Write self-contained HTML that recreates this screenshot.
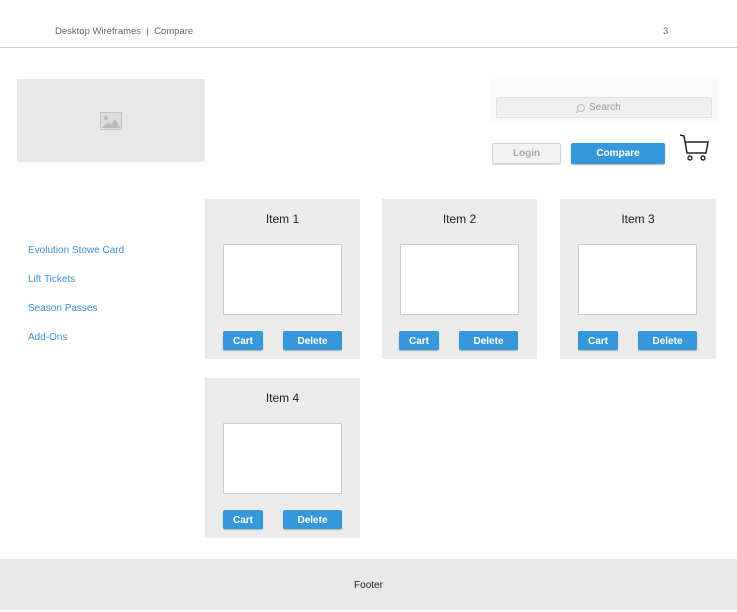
<!DOCTYPE html>
<html><head><meta charset="utf-8"><style>
*{margin:0;padding:0;box-sizing:border-box}
body{width:737px;height:610px;background:#fff;position:relative;font-family:"Liberation Sans",sans-serif;overflow:hidden}
.a{position:absolute}
.hdr{font-size:9.5px;color:#666}
.card{position:absolute;width:155px;height:160px;background:#ebebeb}
.card .t{position:absolute;top:13px;width:100%;text-align:center;font-size:12px;color:#222}
.card .box{position:absolute;left:18px;top:45px;width:119px;height:71px;background:#fff;border:1px solid #ccc}
.btn{position:absolute;top:132px;height:19px;background:#3498db;color:#fff;font-weight:bold;font-size:10px;text-align:center;line-height:21px;border-radius:2px;box-shadow:0 1px 1px rgba(0,0,0,.25)}
.nav{position:absolute;left:28px;font-size:10px;color:#3d8fd6}
</style></head><body>
<div class="a hdr" style="left:55px;top:26px">Desktop Wireframes &nbsp;|&nbsp; Compare</div>
<div class="a hdr" style="left:663px;top:26px">3</div>
<div class="a" style="left:0;top:47px;width:737px;height:1px;background:#ccc"></div>
<div class="a" style="left:17px;top:79px;width:188px;height:83px;background:#e8e8e8"></div>
<svg class="a" style="left:100px;top:112px" width="22" height="18" viewBox="0 0 22 18"><rect x="0.5" y="0.5" width="21" height="17" fill="#ddd" stroke="#c4c4c4"/><circle cx="6" cy="6" r="2" fill="#bbb"/><path d="M2 16 L8 10 L11 13 L15 7 L20 16 Z" fill="#bbb"/></svg>
<div class="a" style="left:490px;top:79px;width:229px;height:43px;background:#fafafa"></div>
<div class="a" style="left:496px;top:97px;width:216px;height:21px;background:#efefef;border:1px solid #e2e2e2;border-radius:2px"></div>
<svg class="a" style="left:576px;top:103px" width="10" height="10"><circle cx="5" cy="5" r="3.5" fill="none" stroke="#bbb"/><line x1="2" y1="8" x2="0" y2="10" stroke="#bbb"/></svg>
<div class="a" style="left:589px;top:102px;font-size:10px;color:#999">Search</div>
<div class="a" style="left:492px;top:143px;width:69px;height:21px;background:#f2f2f2;border:1px solid #d4d4d4;border-radius:2px;box-shadow:0 1px 1px rgba(0,0,0,.15);font-size:10px;font-weight:bold;color:#aaa;text-align:center;line-height:20px">Login</div>
<div class="a" style="left:571px;top:143px;width:94px;height:21px;background:#3498db;border-radius:2px;box-shadow:0 1px 1px rgba(0,0,0,.3);font-size:10px;font-weight:bold;color:#fff;text-align:center;line-height:22px">Compare</div>
<svg class="a" style="left:679px;top:134px" width="32" height="28" viewBox="0 0 32 28"><path d="M1 1 L5 2 L8 19 L27 19 L29 8 L6 8" fill="none" stroke="#222" stroke-width="1.5"/><circle cx="11" cy="24" r="2" fill="none" stroke="#222" stroke-width="1.4"/><circle cx="24" cy="24" r="2" fill="none" stroke="#222" stroke-width="1.4"/></svg>
<div class="nav" style="top:245px">Evolution Stowe Card</div>
<div class="nav" style="top:274px">Lift Tickets</div>
<div class="nav" style="top:303px">Season Passes</div>
<div class="nav" style="top:332px">Add-Ons</div>
<div class="card" style="left:205px;top:199px"><div class="t">Item 1</div><div class="box"></div><div class="btn" style="left:18px;width:40px">Cart</div><div class="btn" style="left:78px;width:59px">Delete</div></div>
<div class="card" style="left:382px;top:199px"><div class="t">Item 2</div><div class="box"></div><div class="btn" style="left:17px;width:40px">Cart</div><div class="btn" style="left:77px;width:59px">Delete</div></div>
<div class="card" style="left:560px;top:199px;width:156px"><div class="t">Item 3</div><div class="box"></div><div class="btn" style="left:18px;width:40px">Cart</div><div class="btn" style="left:78px;width:59px">Delete</div></div>
<div class="card" style="left:205px;top:378px"><div class="t">Item 4</div><div class="box"></div><div class="btn" style="left:18px;width:40px">Cart</div><div class="btn" style="left:78px;width:59px">Delete</div></div>
<div class="a" style="left:0;top:559px;width:737px;height:51px;background:#e8e8e8;text-align:center;line-height:53px;font-size:10px;color:#222">Footer</div>
</body></html>
